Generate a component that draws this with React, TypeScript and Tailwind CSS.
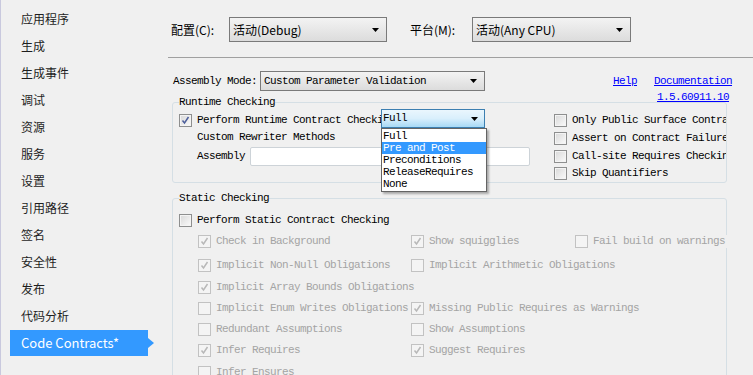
import React from 'react';

const MONO = "font-['Liberation_Mono',monospace] text-[11px] tracking-[-0.6px] leading-[13px] whitespace-nowrap";
const CJK = "font-['Noto_Sans_CJK_SC',sans-serif]";

const navItems = ['应用程序', '生成', '生成事件', '调试', '资源', '服务', '设置', '引用路径', '签名', '安全性', '发布', '代码分析'];

type Cell = [string, boolean];

const staticRows: { h: string; cells: Cell[] }[] = [
  { h: 'h-[24px]', cells: [['Check in Background', true], ['Show squigglies', true], ['Fail build on warnings', false]] },
  { h: 'h-[22px]', cells: [['Implicit Non-Null Obligations', true], ['Implicit Arithmetic Obligations', false]] },
  { h: 'h-[21px]', cells: [['Implicit Array Bounds Obligations', true]] },
  { h: 'h-[21px]', cells: [['Implicit Enum Writes Obligations', false], ['Missing Public Requires as Warnings', true]] },
  { h: 'h-[21px]', cells: [['Redundant Assumptions', false], ['Show Assumptions', false]] },
  { h: 'h-[22px]', cells: [['Infer Requires', true], ['Suggest Requires', true]] },
  { h: 'h-[21px]', cells: [['Infer Ensures', false]] },
];

const runtimeLevels = ['Full', 'Pre and Post', 'Preconditions', 'ReleaseRequires', 'None'];

const runtimeOptions = [
  { t: 'Only Public Surface Contracts', h: 'h-[18px]' },
  { t: 'Assert on Contract Failure', h: 'h-[18px]' },
  { t: 'Call-site Requires Checking', h: 'h-[17px]' },
  { t: 'Skip Quantifiers', h: 'h-[13px]' },
];

function CheckBox({ checked = false, disabled = false }: { checked?: boolean; disabled?: boolean }) {
  return (
    <span
      className={`flex h-[13px] w-[13px] shrink-0 items-center justify-center border ${
        disabled
          ? 'border-[#c2c2c2] bg-[#f4f4f4]'
          : 'border-[#8e8f8f] bg-gradient-to-br from-[#d8d8d8] to-[#fbfbfb] shadow-[inset_0_0_0_1px_#f4f4f4]'
      }`}
    >
      {checked && (
        <svg width="9" height="9" viewBox="0 0 9 9">
          <path
            d="M1.5 4.5 L3.5 7 L7.5 1"
            fill="none"
            stroke={disabled ? '#b8b8b8' : '#4d5f9b'}
            strokeWidth={1.5}
          />
        </svg>
      )}
    </span>
  );
}

function Arrow() {
  return (
    <svg width="7" height="4" viewBox="0 0 7 4" className="shrink-0">
      <path d="M0 0h7L3.5 4z" fill="#000" />
    </svg>
  );
}

function Combo({ text, width, mono = false }: { text: string; width: string; mono?: boolean }) {
  return (
    <div
      className={`flex items-center justify-between border border-[#7a7a7a] bg-gradient-to-b from-[#f3f3f3] to-[#dcdcdc] pl-[3px] pr-[7px] ${width}`}
    >
      <span className={mono ? MONO : `${CJK} text-[12px] leading-[16px]`}>{text}</span>
      <Arrow />
    </div>
  );
}

export default function App() {
  return (
    <div className="flex h-[375px] w-[753px] overflow-hidden bg-[#f0f0f0] text-black">
      {/* ── Left nav ───────────────────────────── */}
      <aside className={`w-[160px] shrink-0 border-l border-[#c9c9de] pt-[5px] ${CJK}`}>
        {navItems.map((n) => (
          <div key={n} className="flex h-[27px] items-center pl-[20px] text-[12px] text-[#1e1e1e]">
            {n}
          </div>
        ))}
        <div className="flex h-[27px] items-center">
          <div className="ml-[9px] flex h-[26px] w-[138px] items-center bg-[#3399ff] pl-[11px] text-[13px] text-white">
            Code Contracts*
          </div>
          <svg width="6" height="10" viewBox="0 0 6 10">
            <path d="M0 0L6 5L0 10z" fill="#3399ff" />
          </svg>
        </div>
      </aside>

      {/* ── Page ───────────────────────────────── */}
      <main className="min-w-0 flex-1 overflow-hidden pl-[8px] pt-[17px]">
        {/* Configuration / platform */}
        <div className={`flex h-[25px] items-stretch pl-[3px] text-[12px] ${CJK}`}>
          <span className="flex w-[58px] items-center">配置(C):</span>
          <Combo text="活动(Debug)" width="w-[158px]" />
          <span className="ml-[23px] flex w-[62px] items-center">平台(M):</span>
          <Combo text="活动(Any CPU)" width="w-[159px]" />
        </div>

        <div className="mt-[15px] border-t border-[#a0a0a0]" />

        {/* Assembly mode + links */}
        <div className="mt-[13px] flex h-[25px] items-start pl-[5px]">
          <span className={`${MONO} flex h-[20px] w-[87px] items-center`}>Assembly Mode:</span>
          <Combo text="Custom Parameter Validation" width="h-[20px] w-[225px]" mono />
          <div className={`${MONO} ml-[128px] flex pt-[2px] leading-[16px] text-[#0000ff] underline`}>
            <span>Help</span>
            <div className="ml-[17px] flex flex-col items-center">
              <span>Documentation</span>
              <span>1.5.60911.10</span>
            </div>
          </div>
        </div>

        {/* Runtime checking */}
        <fieldset className="ml-[4px] w-[555px] min-w-0 rounded-[3px] border border-[#d5dfe5] pb-[2px] pl-[6px]">
          <legend className={`${MONO} leading-[13px]`}>Runtime Checking</legend>
          <div className="flex">
            <div className="w-[375px] shrink-0">
              <div className="flex h-[19px] items-start">
                <div className="mt-[5px]">
                  <CheckBox checked />
                </div>
                <span className={`${MONO} ml-[5px] mt-[5px] w-[184px] overflow-hidden`}>
                  Perform Runtime Contract Checking
                </span>
                <div className="relative z-10">
                  <div className="flex h-[19px] w-[104px] items-center justify-between border border-[#3c7fb1] bg-gradient-to-b from-[#eaf6fd] via-[#d9effc] to-[#a7d9f5] pl-[1px] pr-[6px]">
                    <span className={MONO}>Full</span>
                    <Arrow />
                  </div>
                  <div className="absolute left-0 top-full w-[106px] border border-[#646464] bg-white py-[1px] shadow-[2px_2px_2px_rgba(0,0,0,0.3)]">
                    {runtimeLevels.map((l) => (
                      <div
                        key={l}
                        className={`${MONO} h-[12px] pl-[1px] leading-[12px] ${
                          l === 'Pre and Post' ? 'bg-[#3399ff] text-white' : ''
                        }`}
                      >
                        {l}
                      </div>
                    ))}
                  </div>
                </div>
              </div>
              <div className={`${MONO} flex h-[18px] items-center pl-[18px]`}>Custom Rewriter Methods</div>
              <div className="flex h-[20px] items-center pl-[18px]">
                <span className={`${MONO} w-[53px]`}>Assembly</span>
                <div className="h-[19px] w-[280px] rounded-[2px] border border-[#cdd3d8] bg-white" />
              </div>
            </div>

            <div className="min-w-0 flex-1 overflow-hidden pt-[5px]">
              {runtimeOptions.map((o) => (
                <div key={o.t} className={`flex items-start gap-[5px] ${o.h}`}>
                  <CheckBox />
                  <span className={MONO}>{o.t}</span>
                </div>
              ))}
            </div>
          </div>
        </fieldset>

        {/* Static checking */}
        <fieldset className="ml-[4px] mt-[9px] w-[555px] min-w-0 rounded-[3px] border border-[#d5dfe5] pb-[10px] pl-[6px] pt-[9px]">
          <legend className={`${MONO} leading-[13px]`}>Static Checking</legend>
          <div className="flex h-[21px] items-start gap-[5px]">
            <CheckBox />
            <span className={MONO}>Perform Static Contract Checking</span>
          </div>
          {staticRows.map((r, i) => (
            <div key={i} className={`grid grid-cols-[213px_164px_1fr] items-start pl-[19px] ${r.h}`}>
              {r.cells.map(([t, c]) => (
                <div key={t} className="flex items-start gap-[5px]">
                  <CheckBox checked={c} disabled />
                  <span className={`${MONO} relative bg-[#f0f0f0] pr-[3px] text-[#a4a4a4]`}>{t}</span>
                </div>
              ))}
            </div>
          ))}
        </fieldset>
      </main>
    </div>
  );
}
